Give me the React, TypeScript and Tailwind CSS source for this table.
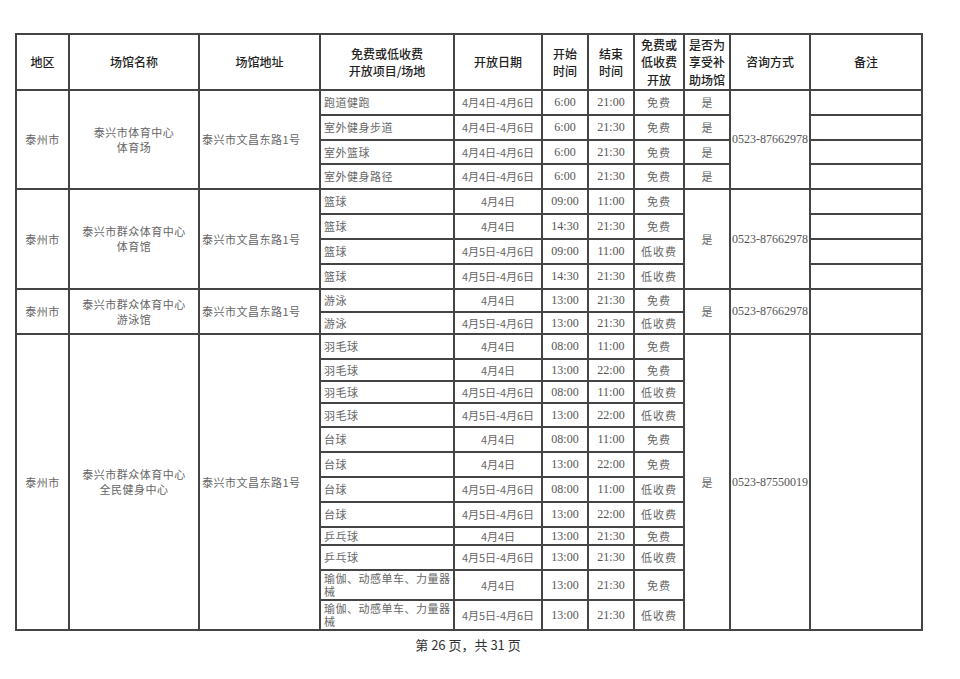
import React from "react";

type Row = {
  item: string;
  date: string;
  start: string;
  end: string;
  fee: string;
  h: string;
};

type Group = {
  name: string[];
  phone: string;
  subsidyPerRow: boolean;
  remarksPerRow: boolean;
  rows: Row[];
};

const D1 = "4月4日-4月6日";
const D4 = "4月4日";
const D5 = "4月5日-4月6日";

const groups: Group[] = [
  {
    name: ["泰兴市体育中心", "体育场"],
    phone: "0523-87662978",
    subsidyPerRow: true,
    remarksPerRow: true,
    rows: [
      { item: "跑道健跑", date: D1, start: "6:00", end: "21:00", fee: "免费", h: "h-[25px]" },
      { item: "室外健身步道", date: D1, start: "6:00", end: "21:30", fee: "免费", h: "h-[25px]" },
      { item: "室外篮球", date: D1, start: "6:00", end: "21:30", fee: "免费", h: "h-[24px]" },
      { item: "室外健身路径", date: D1, start: "6:00", end: "21:30", fee: "免费", h: "h-[25px]" },
    ],
  },
  {
    name: ["泰兴市群众体育中心", "体育馆"],
    phone: "0523-87662978",
    subsidyPerRow: false,
    remarksPerRow: true,
    rows: [
      { item: "篮球", date: D4, start: "09:00", end: "11:00", fee: "免费", h: "h-[25px]" },
      { item: "篮球", date: D4, start: "14:30", end: "21:30", fee: "免费", h: "h-[25px]" },
      { item: "篮球", date: D5, start: "09:00", end: "11:00", fee: "低收费", h: "h-[25px]" },
      { item: "篮球", date: D5, start: "14:30", end: "21:30", fee: "低收费", h: "h-[25px]" },
    ],
  },
  {
    name: ["泰兴市群众体育中心", "游泳馆"],
    phone: "0523-87662978",
    subsidyPerRow: false,
    remarksPerRow: false,
    rows: [
      { item: "游泳", date: D4, start: "13:00", end: "21:30", fee: "免费", h: "h-[23px]" },
      { item: "游泳", date: D5, start: "13:00", end: "21:30", fee: "低收费", h: "h-[22px]" },
    ],
  },
  {
    name: ["泰兴市群众体育中心", "全民健身中心"],
    phone: "0523-87550019",
    subsidyPerRow: false,
    remarksPerRow: false,
    rows: [
      { item: "羽毛球", date: D4, start: "08:00", end: "11:00", fee: "免费", h: "h-[25px]" },
      { item: "羽毛球", date: D4, start: "13:00", end: "22:00", fee: "免费", h: "h-[22px]" },
      { item: "羽毛球", date: D5, start: "08:00", end: "11:00", fee: "低收费", h: "h-[22px]" },
      { item: "羽毛球", date: D5, start: "13:00", end: "22:00", fee: "低收费", h: "h-[24px]" },
      { item: "台球", date: D4, start: "08:00", end: "11:00", fee: "免费", h: "h-[25px]" },
      { item: "台球", date: D4, start: "13:00", end: "22:00", fee: "免费", h: "h-[25px]" },
      { item: "台球", date: D5, start: "08:00", end: "11:00", fee: "低收费", h: "h-[25px]" },
      { item: "台球", date: D5, start: "13:00", end: "22:00", fee: "低收费", h: "h-[25px]" },
      { item: "乒乓球", date: D4, start: "13:00", end: "21:30", fee: "免费", h: "h-[18px]" },
      { item: "乒乓球", date: D5, start: "13:00", end: "21:30", fee: "低收费", h: "h-[25px]" },
      { item: "瑜伽、动感单车、力量器械", date: D4, start: "13:00", end: "21:30", fee: "免费", h: "h-[30px]" },
      { item: "瑜伽、动感单车、力量器械", date: D5, start: "13:00", end: "21:30", fee: "低收费", h: "h-[30px]" },
    ],
  },
];

const bd = "border-2 border-[#444444]";
const cjk = "font-['Noto_Sans_CJK_SC',sans-serif]";
const serif = "font-['Liberation_Serif','Noto_Sans_CJK_SC',serif]";
const body = `${bd} text-[11px] leading-[13px] text-[#666666] ${cjk}`;
const num = `${bd} text-[12px] leading-[13px] text-[#555555] text-center ${serif}`;

function HeaderCell({ lines }: { lines: string[] }) {
  return (
    <th className={`${bd} p-0 text-center align-middle text-[12px] leading-[17.5px] font-medium text-[#222222] ${cjk}`}>
      {lines.map((l, i) => (
        <div key={i}>{l}</div>
      ))}
    </th>
  );
}

export default function App() {
  return (
    <div className="w-[960px] h-[679px] bg-white overflow-hidden">
      <div className="pt-[33px] pl-[15px]">
        <table className="table-fixed border-collapse w-[906px]">
          <colgroup>
            <col className="w-[53px]" />
            <col className="w-[130px]" />
            <col className="w-[121px]" />
            <col className="w-[134px]" />
            <col className="w-[88px]" />
            <col className="w-[46px]" />
            <col className="w-[46px]" />
            <col className="w-[50px]" />
            <col className="w-[46px]" />
            <col className="w-[80px]" />
            <col className="w-[112px]" />
          </colgroup>
          <thead>
            <tr className="h-[56px]">
              <HeaderCell lines={["地区"]} />
              <HeaderCell lines={["场馆名称"]} />
              <HeaderCell lines={["场馆地址"]} />
              <HeaderCell lines={["免费或低收费", "开放项目/场地"]} />
              <HeaderCell lines={["开放日期"]} />
              <HeaderCell lines={["开始", "时间"]} />
              <HeaderCell lines={["结束", "时间"]} />
              <HeaderCell lines={["免费或", "低收费", "开放"]} />
              <HeaderCell lines={["是否为", "享受补", "助场馆"]} />
              <HeaderCell lines={["咨询方式"]} />
              <HeaderCell lines={["备注"]} />
            </tr>
          </thead>
          <tbody>
            {groups.map((g, gi) =>
              g.rows.map((r, ri) => (
                <tr key={`${gi}-${ri}`} className={r.h}>
                  {ri === 0 && (
                    <>
                      <td rowSpan={g.rows.length} className={`${body} text-[10px] text-center align-middle tracking-[0.5px]`}>
                        泰州市
                      </td>
                      <td rowSpan={g.rows.length} className={`${body} text-center align-middle leading-[15px] tracking-[0.5px]`}>
                        {g.name.map((n, i) => (
                          <div key={i}>{n}</div>
                        ))}
                      </td>
                      <td rowSpan={g.rows.length} className={`${body} text-left align-middle pl-[2px] tracking-[0.5px]`}>
                        泰兴市文昌东路1号
                      </td>
                    </>
                  )}
                  <td className={`${body} text-left align-middle pl-[3px] pr-[2px] tracking-[0.5px]`}>{r.item}</td>
                  <td className={`${body} text-center align-middle ${serif} text-[11.5px] text-[#444444]`}>{r.date}</td>
                  <td className={num}>{r.start}</td>
                  <td className={num}>{r.end}</td>
                  <td className={`${body} text-center align-middle tracking-[1px]`}>{r.fee}</td>
                  {g.subsidyPerRow ? (
                    <td className={`${body} text-center align-middle`}>是</td>
                  ) : (
                    ri === 0 && (
                      <td rowSpan={g.rows.length} className={`${body} text-center align-middle`}>
                        是
                      </td>
                    )
                  )}
                  {ri === 0 && (
                    <td rowSpan={g.rows.length} className={`${num} text-[11.5px] align-middle`}>
                      {g.phone}
                    </td>
                  )}
                  {g.remarksPerRow ? (
                    <td className={bd}></td>
                  ) : (
                    ri === 0 && <td rowSpan={g.rows.length} className={bd}></td>
                  )}
                </tr>
              ))
            )}
          </tbody>
        </table>
        <div className={`w-[906px] mt-[6px] text-center text-[13px] leading-[16px] text-[#333333] ${cjk}`}>
          第 26 页，共 31 页
        </div>
      </div>
    </div>
  );
}
